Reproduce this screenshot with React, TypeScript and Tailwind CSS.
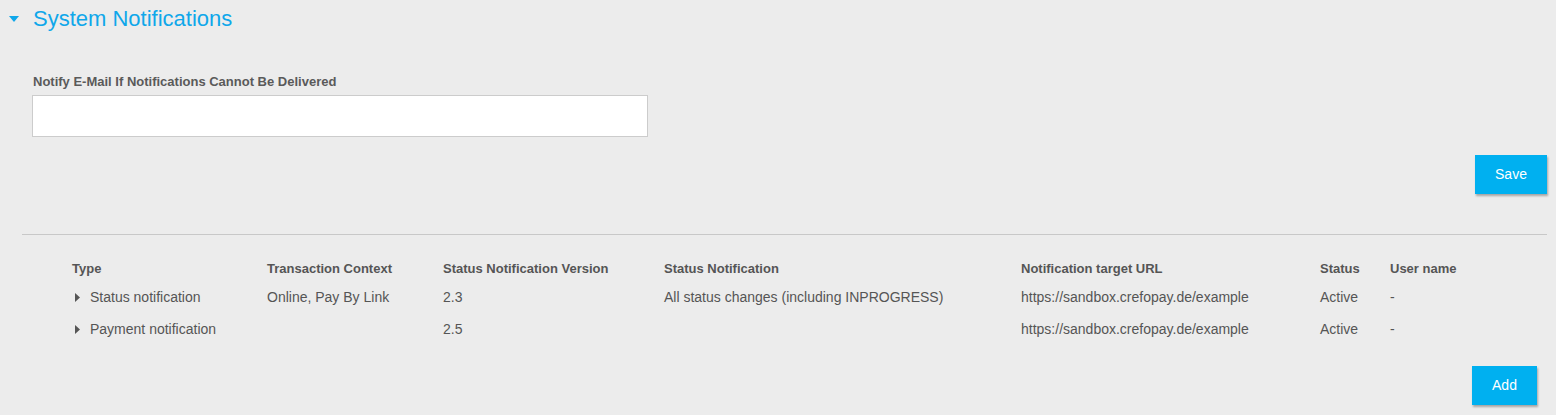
const font = "font-['Liberation_Sans',Arial,sans-serif]";

const columns = [
  { label: "Type", w: "w-[195px]" },
  { label: "Transaction Context", w: "w-[176px]" },
  { label: "Status Notification Version", w: "w-[221px]" },
  { label: "Status Notification", w: "w-[357px]" },
  { label: "Notification target URL", w: "w-[299px]" },
  { label: "Status", w: "w-[70px]" },
  { label: "User name", w: "flex-1" },
];

const rows = [
  ["Status notification", "Online, Pay By Link", "2.3", "All status changes (including INPROGRESS)", "https://sandbox.crefopay.de/example", "Active", "-"],
  ["Payment notification", "", "2.5", "", "https://sandbox.crefopay.de/example", "Active", "-"],
];

function CaretRight() {
  return (
    <svg width="5" height="9" viewBox="0 0 5 9" className="mr-[10px] shrink-0">
      <path d="M0 0 L5 4.5 L0 9 Z" fill="#555" />
    </svg>
  );
}

export default function App() {
  return (
    <div className={`min-h-[415px] w-full bg-[#ececec] ${font} text-[#555]`}>
      <div className="flex items-center pl-[9px] pt-[5px]">
        <svg width="10" height="6" viewBox="0 0 10 6" className="mr-[14px]">
          <path d="M0 0 L10 0 L5 6 Z" fill="#0fa7ea" />
        </svg>
        <h2 className="text-[22px] leading-[28px] text-[#0fa7ea]">System Notifications</h2>
      </div>

      <div className="pl-[32px] pt-[41px]">
        <label className="block text-[13px] font-bold leading-[15px] text-[#5a5a5a] pl-[1px]">
          Notify E-Mail If Notifications Cannot Be Delivered
        </label>
        <input
          type="text"
          className="mt-[6px] block h-[42px] w-[616px] border border-[#cccccc] bg-white outline-none"
        />
      </div>

      <div className="flex justify-end pr-[9px] pt-[18px]">
        <button
          type="button"
          className="h-[39px] w-[72px] bg-[#00b0f0] text-[14px] text-white shadow-[1px_2px_2px_rgba(0,0,0,0.3)]"
        >
          Save
        </button>
      </div>

      <div className="mx-[22px] mt-[40px] mr-[9px] border-t border-[#c8c8c8]" />

      <div className="pl-[72px] pt-[26px]">
        <div className="flex h-[16px] items-center text-[13px] font-bold">
          {columns.map((c) => (
            <div key={c.label} className={c.w}>
              {c.label}
            </div>
          ))}
        </div>
        {rows.map((r, i) => (
          <div key={i} className={`flex h-[32px] items-center text-[14px] ${i === 0 ? "mt-[4px]" : ""}`}>
            {r.map((cell, j) => (
              <div key={j} className={`${columns[j].w} flex items-center ${j === 0 ? "pl-[3px]" : ""}`}>
                {j === 0 && <CaretRight />}
                {cell}
              </div>
            ))}
          </div>
        ))}
      </div>

      <div className="flex justify-end pr-[19px] pt-[21px]">
        <button
          type="button"
          className="h-[39px] w-[65px] bg-[#00b0f0] text-[14px] text-white shadow-[1px_2px_2px_rgba(0,0,0,0.3)]"
        >
          Add
        </button>
      </div>
    </div>
  );
}
